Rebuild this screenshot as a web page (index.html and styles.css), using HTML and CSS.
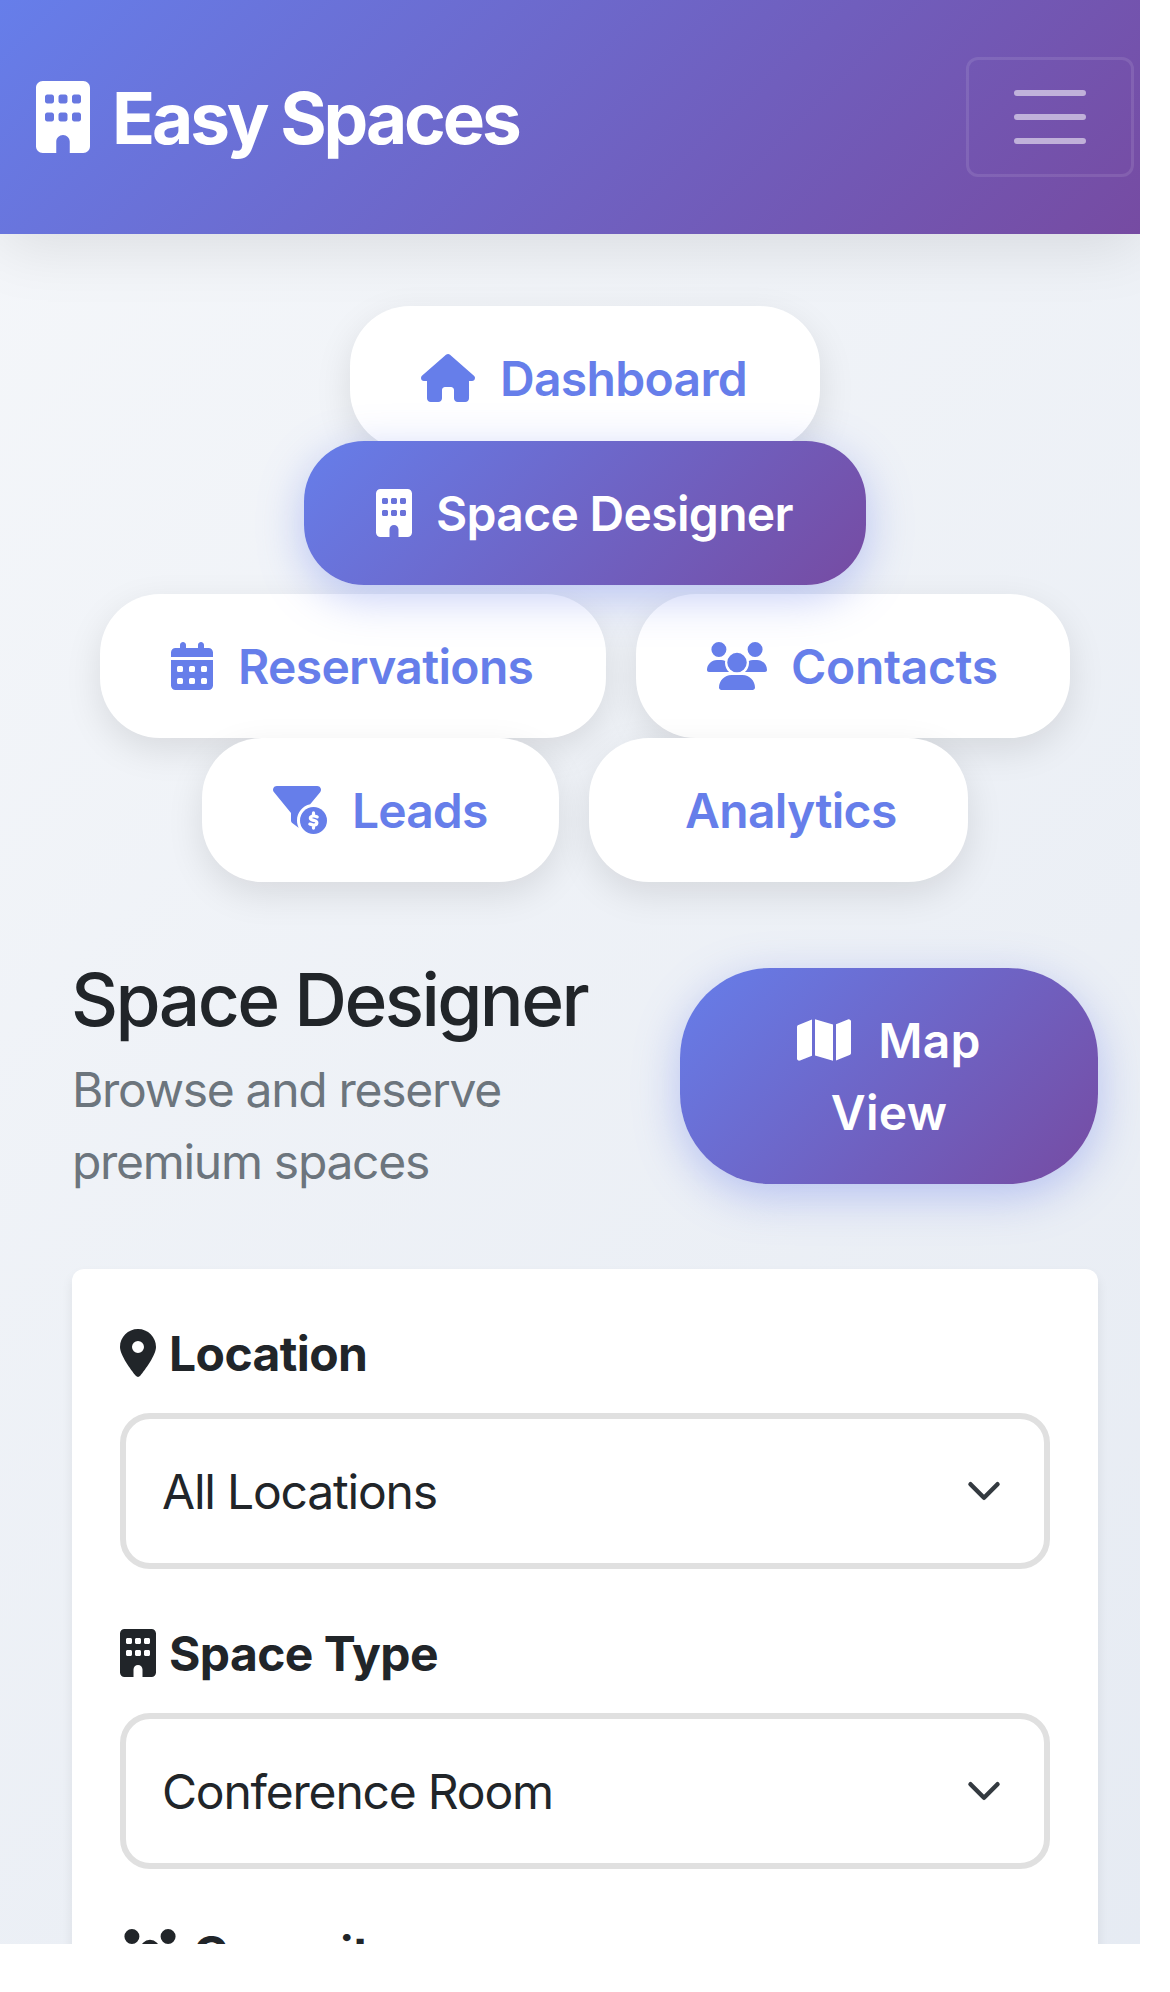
FILE: index.html
```
<!DOCTYPE html>
<html lang="en">
<head>
<meta charset="utf-8">
<title>Easy Spaces</title>
<link rel="stylesheet" href="styles.css">
</head>
<body>
<svg class="defs" aria-hidden="true">
  <symbol id="building" viewBox="0 0 384 512"><path d="M48 0C21.5 0 0 21.5 0 48V464c0 26.5 21.5 48 48 48h96V432c0-26.500 21.500-48 48-48s48 21.500 48 48v80h96c26.500 0 48-21.500 48-48V48c0-26.500-21.500-48-48-48H48zM64 240c0-8.800 7.200-16 16-16h32c8.800 0 16 7.200 16 16v32c0 8.800-7.200 16-16 16H80c-8.800 0-16-7.200-16-16V240zm112-16h32c8.800 0 16 7.200 16 16v32c0 8.800-7.200 16-16 16H176c-8.800 0-16-7.200-16-16V240c0-8.800 7.200-16 16-16zm80 16c0-8.800 7.200-16 16-16h32c8.800 0 16 7.200 16 16v32c0 8.800-7.200 16-16 16H272c-8.800 0-16-7.200-16-16V240zM80 96h32c8.800 0 16 7.200 16 16v32c0 8.800-7.200 16-16 16H80c-8.800 0-16-7.200-16-16V112c0-8.800 7.200-16 16-16zm80 16c0-8.800 7.200-16 16-16h32c8.800 0 16 7.200 16 16v32c0 8.800-7.200 16-16 16H176c-8.800 0-16-7.200-16-16V112zM272 96h32c8.800 0 16 7.200 16 16v32c0 8.800-7.200 16-16 16H272c-8.800 0-16-7.200-16-16V112c0-8.800 7.200-16 16-16z"/></symbol>
  <symbol id="users" viewBox="0 0 640 512"><path d="M127 0a80 80 0 1 1 0 160A80 80 0 1 1 127 0zM513 0a80 80 0 1 1 0 160A80 80 0 1 1 513 0zM0 298.700C0 239.800 47.800 192 106.700 192h42.700c15.900 0 31 3.500 44.600 9.700c-1.300 7.200-1.900 14.700-1.900 22.300c0 38.200 16.800 72.500 43.300 96H21.300C9.600 320 0 310.400 0 298.700zM404.700 320c26.600-23.500 43.300-57.800 43.300-96c0-7.600-.7-15-1.900-22.300c13.600-6.300 28.700-9.700 44.600-9.700h42.700C592.200 192 640 239.800 640 298.700c0 11.800-9.600 21.300-21.300 21.300H404.700zM216 219a104 104 0 1 1 208 0 104 104 0 1 1 -208 0zM128 485.300C128 411.700 187.700 352 261.300 352H378.700C452.300 352 512 411.700 512 485.300c0 14.700-11.900 26.700-26.700 26.700H154.700c-14.700 0-26.700-11.900-26.700-26.700z"/></symbol>
</svg>
<div class="page">
  <header class="navbar">
    <a class="brand"><svg class="brand-icon"><use href="#building"/></svg><span>Easy Spaces</span></a>
    <button class="toggler" aria-label="Menu"><svg viewBox="0 0 30 30"><path d="M4 7h22M4 15h22M4 23h22"/></svg></button>
  </header>
  <main class="content">
    <nav class="pills">
      <a class="pill dashboard"><svg class="w54" viewBox="0 0 576 512"><path d="M575.8 255.5c0 18-15 32.1-32 32.1h-32l.7 160.2c0 2.700-.2 5.400-.5 8.100V472c0 22.100-17.900 40-40 40H392c-22.100 0-40-17.900-40-40V384c0-17.700-14.300-32-32-32H256c-17.700 0-32 14.300-32 32v88c0 22.100-17.900 40-40 40H104c-22.100 0-40-17.900-40-40V287.600H32c-18 0-32-14-32-32.100c0-9 3-17 10-24L266.400 8c7-7 15-8 22-8s15 2 21 7L564.800 231.500c8 7 12 15 11 24z"/></svg><span>Dashboard</span></a>
      <a class="pill designer active"><svg class="w36"><use href="#building"/></svg><span>Space Designer</span></a>
      <a class="pill reservations"><svg class="w42" viewBox="0 0 448 512"><path fill-rule="evenodd" d="M128 0c17.700 0 32 14.300 32 32V64H288V32c0-17.700 14.300-32 32-32s32 14.300 32 32V64h48c26.500 0 48 21.500 48 48v48H0V112C0 85.500 21.500 64 48 64H96V32c0-17.700 14.300-32 32-32zM0 192H448V464c0 26.500-21.500 48-48 48H48c-26.500 0-48-21.500-48-48V192zM80 256h32a16 16 0 0 1 16 16v32a16 16 0 0 1-16 16H80a16 16 0 0 1-16-16V272a16 16 0 0 1 16-16zM208 256h32a16 16 0 0 1 16 16v32a16 16 0 0 1-16 16H208a16 16 0 0 1-16-16V272a16 16 0 0 1 16-16zM336 256h32a16 16 0 0 1 16 16v32a16 16 0 0 1-16 16H336a16 16 0 0 1-16-16V272a16 16 0 0 1 16-16zM80 384h32a16 16 0 0 1 16 16v32a16 16 0 0 1-16 16H80a16 16 0 0 1-16-16V400a16 16 0 0 1 16-16zM208 384h32a16 16 0 0 1 16 16v32a16 16 0 0 1-16 16H208a16 16 0 0 1-16-16V400a16 16 0 0 1 16-16zM336 384h32a16 16 0 0 1 16 16v32a16 16 0 0 1-16 16H336a16 16 0 0 1-16-16V400a16 16 0 0 1 16-16z"/></svg><span>Reservations</span></a>
      <a class="pill contacts"><svg class="w60"><use href="#users"/></svg><span>Contacts</span></a>
      <a class="pill leads"><svg class="w54" viewBox="0 0 576 512"><path d="M3.900 22.900C10.500 8.900 24.500 0 40 0H472c15.500 0 29.500 8.900 36.100 22.900s4.600 30.500-5.200 42.500L396.400 195.600C316.200 212.100 256 283 256 368c0 27.400 6.300 53.400 17.500 76.500c-1.600-.8-3.200-1.800-4.700-2.900l-64-48c-8.100-6-12.800-15.500-12.800-25.600V288.900L9 65.300C-.7 53.400-2.800 36.800 3.900 22.900z"/><circle cx="432" cy="368" r="144"/><path class="dollar" d="M432 287v30M432 419v30M471 330C455 322 442 319 430 320C393 322 386 355 424 364L440 368C482 378 474 416 432 416C418 416 405 411 393 406"/></svg><span>Leads</span></a>
      <a class="pill analytics"><span>Analytics</span></a>
    </nav>
    <section class="heading">
      <div class="titles">
        <h2>Space Designer</h2>
        <p>Browse and reserve<br>premium spaces</p>
      </div>
      <button class="map"><span class="line"><svg class="w54" viewBox="0 0 576 512"><path d="M384 476.100L192 421.200V35.900L384 90.800V476.100zm32-1.200V88.400L543.100 37.500c15.800-6.300 32.900 5.300 32.900 22.300V394.600c0 9.800-6 18.600-15.100 22.300L416 474.800zM15.100 95.100L160 37.200V423.600L32.900 474.500C17.100 480.800 0 469.200 0 452.200V117.400c0-9.800 6-18.600 15.100-22.300z"/></svg><span>Map</span></span><span class="second">View</span></button>
    </section>
    <section class="card">
      <div class="label"><svg class="w36" viewBox="0 0 384 512"><path d="M215.700 499.200C267 435 384 279.400 384 192C384 86 298 0 192 0S0 86 0 192c0 87.400 117 243 168.300 307.200c12.300 15.300 35.100 15.300 47.400 0zM192 128a64 64 0 1 1 0 128 64 64 0 1 1 0-128z"/></svg><span>Location</span></div>
      <div class="select"><span>All Locations</span><svg viewBox="0 0 16 16"><path d="m2 5 6 6 6-6"/></svg></div>
      <div class="label"><svg class="w36"><use href="#building"/></svg><span>Space Type</span></div>
      <div class="select"><span>Conference Room</span><svg viewBox="0 0 16 16"><path d="m2 5 6 6 6-6"/></svg></div>
      <div class="label"><svg class="w60"><use href="#users"/></svg><span>Capacity</span></div>
    </section>
  </main>
</div>
</body>
</html>
```
FILE: styles.css
```
* { box-sizing: border-box; }
body { margin: 0; background: #fff; color: #212529; font-family: Inter, "Liberation Sans", sans-serif; font-size: 48px; line-height: 72px; }
svg { display: block; flex: none; fill: currentColor; }
.defs { display: none; }
span { white-space: nowrap; }
button { border: 0; background: none; font: inherit; color: inherit; }
.page { width: 1140px; height: 1944px; overflow: hidden; background: linear-gradient(135deg, #f5f7fa, #c3cfe2) 0 0 / 1140px 9140px no-repeat; }
.navbar { display: flex; align-items: center; justify-content: space-between; height: 234px; padding: 0 6px 0 36px; background: linear-gradient(135deg, #667eea, #764ba2); box-shadow: 0 12px 60px rgba(0,0,0,.1); color: #fff; }
.brand { display: flex; align-items: center; gap: 22px; font-size: 71px; font-weight: 700; letter-spacing: -3.1px; }
.brand span { padding-top: 1px; }
.brand-icon { width: 54px; height: 72px; }
.toggler { width: 168px; height: 120px; padding: 12px 36px; border: 3px solid rgba(255,255,255,.1); border-radius: 12px; }
.toggler svg { width: 90px; height: 90px; fill: none; stroke: rgba(255,255,255,.55); stroke-width: 2; stroke-linecap: round; }
.content { padding: 72px 42px 0 72px; }
.pills { display: flex; flex-wrap: wrap; justify-content: center; column-gap: 30px; }
.pill { display: flex; align-items: center; gap: 25px; height: 144px; padding-left: 71px; border-radius: 60px; background: #fff; color: #667eea; font-weight: 600; letter-spacing: -.68px; box-shadow: 0 12px 36px rgba(0,0,0,.1); }
.pill span, .label span, .select span { padding-top: 1px; }
.pill svg, .label svg, .line svg { height: 48px; }
.active { background: linear-gradient(135deg, #667eea, #764ba2); color: #fff; box-shadow: 0 12px 45px rgba(102,126,234,.4); transform: translateY(-9px); }
.w36 { width: 36px; }
.w42 { width: 42px; }
.w54 { width: 54px; }
.w60 { width: 60px; }
.dashboard { width: 470px; margin: 0 200px; }
.designer { width: 562px; margin: 0 200px; padding-left: 72px; gap: 24px; }
.reservations { width: 506px; }
.contacts { width: 434px; gap: 24px; letter-spacing: -.35px; }
.leads { width: 357px; letter-spacing: -.9px; }
.analytics { width: 379px; padding-left: 96px; }
.dollar { fill: none; stroke: #fff; stroke-width: 34; stroke-linecap: round; }
.heading { display: flex; justify-content: space-between; align-items: center; margin-top: 72px; height: 243px; }
h2 { margin: 1px 0 9px -1px; font-size: 73px; line-height: 90px; font-weight: 500; letter-spacing: -2.6px; }
p { margin: 0; color: #6c757d; letter-spacing: -1.3px; }
.map { width: 418px; height: 216px; padding: 0; border-radius: 90px; background: linear-gradient(135deg, #667eea, #764ba2); box-shadow: 0 12px 45px rgba(102,126,234,.4); color: #fff; font-weight: 600; letter-spacing: .3px; }
.line { display: flex; justify-content: center; align-items: center; gap: 27px; height: 72px; }
.line span { padding-top: 2px; }
.second { display: block; height: 72px; padding-top: 1px; }
.card { margin-top: 72px; height: 900px; padding: 48px; border-radius: 12px; background: #fff; box-shadow: 0 6px 12px rgba(0,0,0,.075); }
.label { display: flex; align-items: center; gap: 13px; height: 72px; margin-bottom: 24px; font-weight: 700; letter-spacing: -.6px; }
.select { display: flex; align-items: center; justify-content: space-between; height: 156px; margin-bottom: 48px; padding: 0 42px 0 36px; border: 6px solid #e0e0e0; border-radius: 30px; background: #fff; letter-spacing: -1.2px; }
.select svg { width: 36px; height: 36px; fill: none; stroke: #343a40; stroke-width: 2; stroke-linecap: round; stroke-linejoin: round; }
```
